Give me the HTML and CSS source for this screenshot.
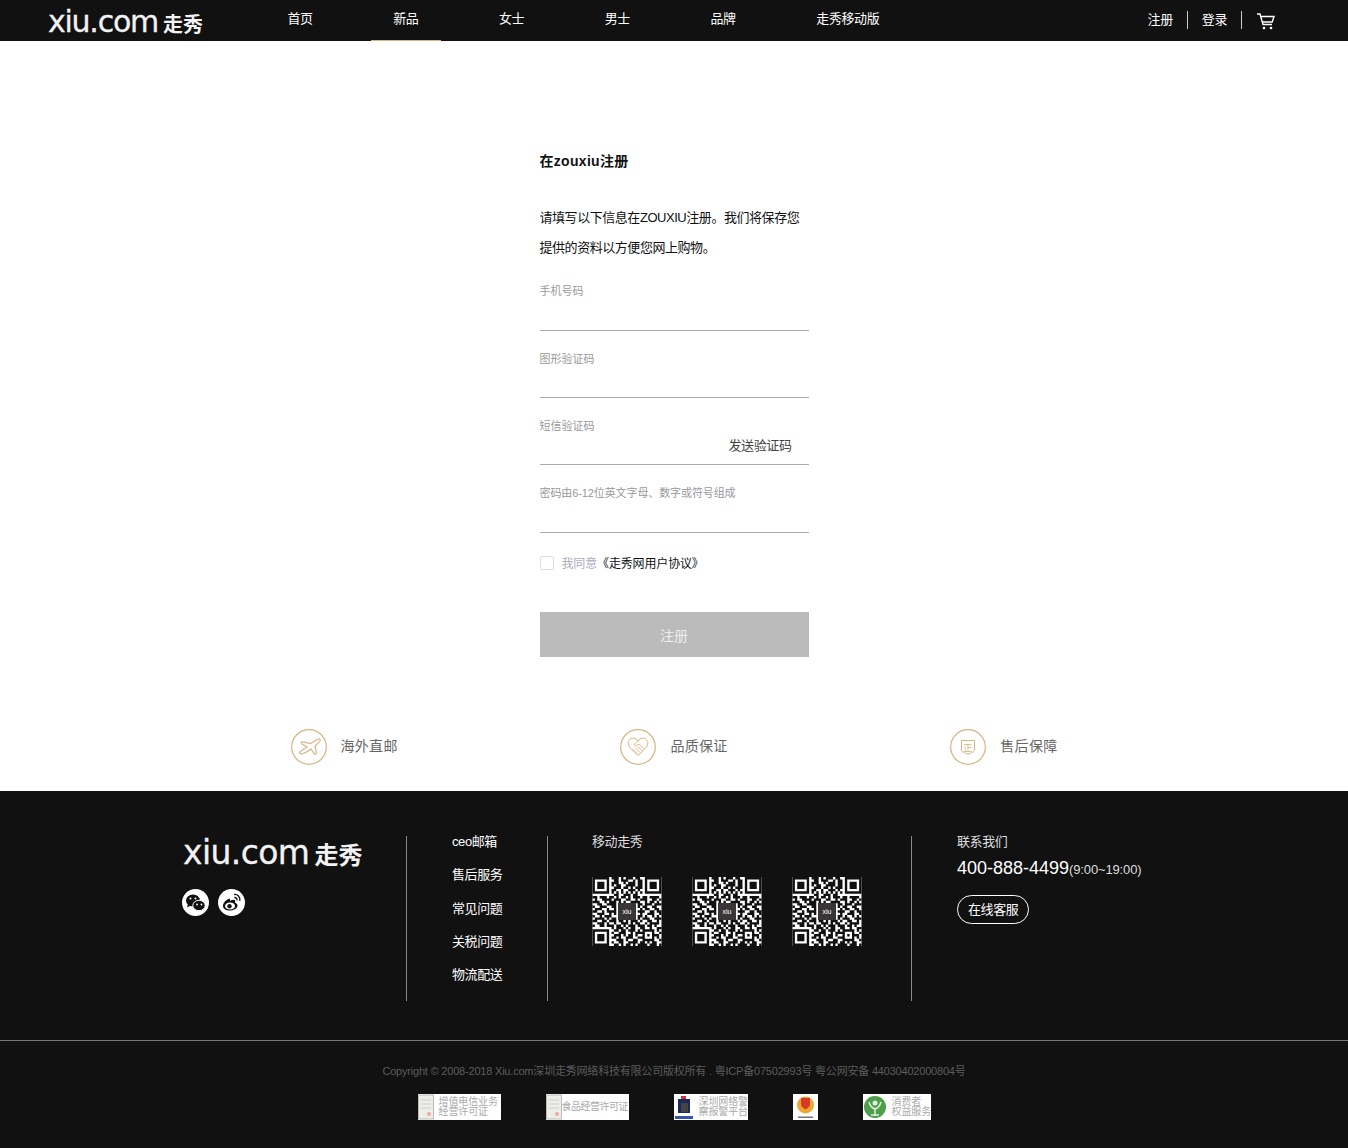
FILE: index.html
```html
<!DOCTYPE html>
<html lang="zh-CN">
<head>
  <title>在zouxiu注册</title>
  <meta charset="utf-8"/>
  <link rel="stylesheet" href="styles.css">
</head>
<body>

  <svg class="defs" width="0" height="0">
    <symbol id="qr" viewBox="0 0 29 29">
      <rect width="29" height="29" fill="#fff"/>
      <path fill="none" stroke="#111" d="M.5 .5h6v6h-6zM22.5 .5h6v6h-6zM.5 22.5h6v6h-6z"/>
      <path fill="#111" d="M2 2h3v3h-3zM24 2h3v3h-3zM2 24h3v3h-3z"/>
      <path fill="none" stroke="#111" d="M8 .5h3M12 .5h1M14 .5h3M18 .5h2
        M9 1.5h2M12 1.5h3M17 1.5h1M19 1.5h2
        M8 2.5h3M13 2.5h1M15 2.5h3M19 2.5h2
        M8 3.5h1M10 3.5h2M14 3.5h4M19 3.5h2
        M9 4.5h3M13 4.5h2M16 4.5h1M18 4.5h3
        M8 5.5h2M12 5.5h1M15 5.5h3M19 5.5h1
        M8 6.5h1M10 6.5h1M12 6.5h1M14 6.5h1M16 6.5h1M18 6.5h1M20 6.5h1
        M9 7.5h2M13 7.5h3M17 7.5h2
        M0 8.5h2M3 8.5h3M7 8.5h2M10 8.5h1M12 8.5h2M15 8.5h1M17 8.5h3M21 8.5h2M24 8.5h4
        M1 9.5h1M4 9.5h4M9 9.5h3M14 9.5h2M18 9.5h1M20 9.5h3M25 9.5h2M28 9.5h1
        M0 10.5h3M5 10.5h1M7 10.5h3M11 10.5h1M13 10.5h1M16 10.5h4M22 10.5h1M24 10.5h2M27 10.5h1
        M2 11.5h2M6 11.5h4M19 11.5h2M22 11.5h3M26 11.5h3
        M0 12.5h1M3 12.5h3M8 12.5h2M19 12.5h1M21 12.5h2M25 12.5h2
        M1 13.5h3M6 13.5h1M9 13.5h1M20 13.5h1M22 13.5h2M26 13.5h2
        M0 14.5h2M4 14.5h1M6 14.5h4M19 14.5h3M24 14.5h2M27 14.5h2
        M2 15.5h3M7 15.5h1M9 15.5h1M20 15.5h1M23 15.5h3M28 15.5h1
        M0 16.5h1M3 16.5h1M5 16.5h3M19 16.5h2M22 16.5h1M25 16.5h1M27 16.5h1
        M1 17.5h4M6 17.5h1M8 17.5h2M19 17.5h1M21 17.5h3M26 17.5h3
        M0 18.5h2M4 18.5h2M7 18.5h3M11 18.5h2M14 18.5h1M16 18.5h3M20 18.5h1M23 18.5h2M27 18.5h1
        M2 19.5h3M6 19.5h1M9 19.5h1M12 19.5h3M16 19.5h1M18 19.5h2M22 19.5h1M24 19.5h4
        M0 20.5h1M3 20.5h2M6 20.5h3M10 20.5h2M13 20.5h1M15 20.5h3M19 20.5h3M23 20.5h2M26 20.5h1
        M8 21.5h1M10 21.5h3M14 21.5h1M16 21.5h2M20 21.5h2M24 21.5h1M27 21.5h2
        M9 22.5h2M12 22.5h2M15 22.5h3M19 22.5h1M21 22.5h5M27 22.5h1
        M8 23.5h1M11 23.5h3M16 23.5h1M18 23.5h3M21 23.5h1M25 23.5h1M28 23.5h1
        M9 24.5h3M13 24.5h1M15 24.5h2M18 24.5h1M21 24.5h1M23 24.5h1M25 24.5h3
        M8 25.5h2M11 25.5h1M14 25.5h3M19 25.5h3M25 25.5h1M27 25.5h1
        M10 26.5h3M14 26.5h1M17 26.5h2M21 26.5h5M28 26.5h1
        M8 27.5h1M11 27.5h2M15 27.5h4M20 27.5h2M23 27.5h1M25 27.5h2
        M9 28.5h2M12 28.5h1M14 28.5h2M17 28.5h1M19 28.5h4M24 28.5h3M28 28.5h1"/>
    </symbol>
  </svg>

  <div class="topbar">
    <a class="logo"><span class="logo-en">xiu.com</span><span class="logo-cn">走秀</span></a>
    <ul class="nav">
      <li>首页</li>
      <li class="on">新品</li>
      <li>女士</li>
      <li>男士</li>
      <li>品牌</li>
      <li>走秀移动版</li>
    </ul>
    <div class="usr">
      <a>注册</a>
      <a>登录</a>
      <svg class="cart" width="18" height="17" viewBox="0 0 18 17">
        <path fill="none" stroke="#fff" stroke-width="1.4" d="M0 1h3l3 10.5h9M4 3.5h13l-1.8 5.5H5.5"/>
        <circle cx="7" cy="15" r="1.3" fill="#fff"/>
        <circle cx="14" cy="15" r="1.3" fill="#fff"/>
      </svg>
    </div>
  </div>

  <div class="reg">
    <h1>在zouxiu注册</h1>
    <p>请填写以下信息在ZOUXIU注册。我们将保存您提供的资料以方便您网上购物。</p>
    <div class="field">
      <label>手机号码</label>
      <div class="inp"></div>
    </div>
    <div class="field">
      <label>图形验证码</label>
      <div class="inp"></div>
    </div>
    <div class="field">
      <label>短信验证码</label>
      <div class="inp"><span class="send">发送验证码</span></div>
    </div>
    <div class="field pwd">
      <label>密码由6-12位英文字母、数字或符号组成</label>
      <div class="inp"></div>
    </div>
    <div class="agree">
      <i class="box"></i>
      <span class="gray">我同意</span><span>《走秀网用户协议》</span>
    </div>
    <button type="button" class="submit">注册</button>
  </div>

  <div class="services">
    <div class="svc">
      <svg width="36" height="36" viewBox="0 0 36 36">
        <circle cx="18" cy="18" r="17.3" fill="none" stroke="#d5b583" stroke-width="1.2"/>
        <path fill="none" stroke="#d5b583" stroke-width="1.2" stroke-linejoin="round" d="M27.5 10c1.5-.6 2.3.6 1.4 2-1.400 2.100-3.200 3.700-5 5.200l1.400 6.600c.2.900-1 2.200-1.700 1.400l-3.700-5.200c-3.200 2.400-6.800 5-9.800 4.800-1.800-.1-1.900-1.700-.6-2.600 2-1.500 4.500-2.900 6.700-4.300l-5.300-3c-1-.6-1-2.100.2-2.100 2.700 0 5.600 1.200 8.300 1.800 2.800-1.800 5.300-3.500 8.100-4.600z"/>
      </svg>
      <span>海外直邮</span>
    </div>
    <div class="svc">
      <svg width="36" height="36" viewBox="0 0 36 36">
        <circle cx="18" cy="18" r="17.3" fill="none" stroke="#d5b583" stroke-width="1.2"/>
        <path fill="none" stroke="#d5b583" d="M18 12c-2.200-3-6-3.800-8.300-1.500-2.500 2.500-1.600 6.200.6 8.600l7.700 7.400 7.700-7.400c2.200-2.400 3.100-6.100.6-8.600-2.300-2.300-6.100-1.500-8.300 1.500z"/>
        <path fill="none" stroke="#d5b583" stroke-width=".9" d="M18 12l-4 3.500c1 1.300 2.500 1.300 3.700.3l1.300-.8 6 5.500M12.500 20l5 5M15 18.500l5 5M17.500 17.500l5 4.500"/>
      </svg>
      <span>品质保证</span>
    </div>
    <div class="svc">
      <svg width="36" height="36" viewBox="0 0 36 36">
        <circle cx="18" cy="18" r="17.3" fill="none" stroke="#d5b583" stroke-width="1.2"/>
        <path fill="none" stroke="#d5b583" d="M11.500 11.500h13v9.500c0 2-3.500 3-6.500 4-3-1-6.500-2-6.500-4z"/>
        <text x="18" y="21.500" text-anchor="middle" class="zheng">正</text>
      </svg>
      <span>售后保障</span>
    </div>
  </div>

  <div class="footer">
    <div class="foot-main">
      <div class="foot-brand">
        <a class="logo big"><span class="logo-en">xiu.com</span><span class="logo-cn">走秀</span></a>
        <div class="social">
          <svg width="27" height="27" viewBox="0 0 27 27">
            <circle cx="13.500" cy="13.500" r="13.500" fill="#fff"/>
            <ellipse cx="11" cy="11.500" rx="7" ry="6" fill="#111"/>
            <path fill="#111" d="M6 15l-1 3.500 4-2z"/>
            <ellipse cx="17" cy="16.500" rx="6.200" ry="5.200" fill="#111" stroke="#fff"/>
            <circle cx="8.500" cy="9.500" r="1" fill="#fff"/>
            <circle cx="13.500" cy="9.500" r="1" fill="#fff"/>
            <circle cx="15" cy="15.500" r=".9" fill="#fff"/>
            <circle cx="19.500" cy="15.500" r=".9" fill="#fff"/>
          </svg>
          <svg width="27" height="27" viewBox="0 0 27 27">
            <circle cx="13.500" cy="13.500" r="13.500" fill="#fff"/>
            <path fill="#111" d="M11.500 9.500c-3 1-7 4.500-6.500 8 .5 3 4.500 4.500 8 4 4-.5 7-3 6.500-5.500-.2-1.300-1.500-2-2.500-2.300.8-1.700 0-3-1.500-3-1.300 0-2.500.5-3.500 1.200.3-1.700-.3-2.800-.5-2.400z"/>
            <ellipse cx="12" cy="17" rx="5" ry="3.600" fill="#fff"/>
            <circle cx="11.500" cy="17.200" r="2.200" fill="#111"/>
            <path fill="none" stroke="#111" stroke-width="1.300" d="M16 5.500c3.500-.5 6.500 2.500 5.800 6.300M16.300 8.500c1.800-.2 3 1.200 2.700 3"/>
          </svg>
        </div>
      </div>
      <div class="foot-links">
        <a>ceo邮箱</a>
        <a>售后服务</a>
        <a>常见问题</a>
        <a>关税问题</a>
        <a>物流配送</a>
      </div>
      <div class="foot-qr">
        <div class="foot-title">移动走秀</div>
        <div class="qrs">
          <div class="qr"><svg width="70" height="69"><use href="#qr"/></svg><span>xiu</span></div>
          <div class="qr"><svg width="70" height="69"><use href="#qr"/></svg><span>xiu</span></div>
          <div class="qr"><svg width="70" height="69"><use href="#qr"/></svg><span>xiu</span></div>
        </div>
      </div>
      <div class="foot-contact">
        <div class="foot-title">联系我们</div>
        <div class="tel">400-888-4499<small>(9:00~19:00)</small></div>
        <a class="kefu">在线客服</a>
      </div>
    </div>
    <div class="foot-bottom">
      <div class="copy">Copyright © 2008-2018 Xiu.com深圳走秀网络科技有限公司版权所有 . 粤ICP备07502993号 粤公网安备 44030402000804号</div>
      <div class="badges">
        <div class="badge w83">
          <svg width="16" height="26" viewBox="0 0 16 26"><rect x=".5" y="1" width="15" height="24" fill="#eeeee8" stroke="#bbb"/><path stroke="#ccc" d="M3 6h10M3 10h10M3 14h10"/><circle cx="11" cy="20" r="2" fill="#eaa"/></svg>
          <span class="two">增值电信业务<br>经营许可证</span>
        </div>
        <div class="badge w83">
          <svg width="16" height="26" viewBox="0 0 16 26"><rect x=".5" y="1" width="15" height="24" fill="#eeeee8" stroke="#bbb"/><path stroke="#ccc" d="M3 6h10M3 10h10M3 14h10"/><circle cx="11" cy="20" r="2" fill="#eaa"/></svg>
          <span class="one">食品经营许可证</span>
        </div>
        <div class="badge w74">
          <svg width="20" height="26" viewBox="0 0 20 26"><rect x="4" y="5" width="12" height="14" fill="#1b2a5c"/><rect x="7" y="9" width="7" height="9" fill="#444"/><path fill="#c33" d="M7 2h5v3h-5z"/><rect x="1" y="22" width="18" height="3" fill="#35a"/></svg>
          <span class="two">深圳网络警<br>察报警平台</span>
        </div>
        <div class="badge w25">
          <svg width="25" height="26" viewBox="0 0 25 26"><circle cx="12.500" cy="11" r="8.500" fill="#eea82f"/><path fill="#d8392b" d="M8 4h9v6c0 3-2.500 4-4.500 5.500-2-1.500-4.500-2.500-4.500-5.500z"/><rect x="5" y="22.500" width="15" height="1.500" fill="#777"/></svg>
        </div>
        <div class="badge w68">
          <svg width="24" height="26" viewBox="0 0 24 26"><circle cx="12" cy="13" r="11" fill="#4f9e4a"/><circle cx="12" cy="9" r="2.500" fill="#dfeedd"/><path fill="none" stroke="#dfeedd" stroke-width="1.500" d="M6 8c1 4 3 6 6 7 3-1 5-3 6-7M12 15v7M8 21h8"/></svg>
          <span class="two">消费者<br>权益服务</span>
        </div>
      </div>
    </div>
  </div>

</body>
</html>
```

FILE: styles.css
```css
* {
  box-sizing: border-box;
}

body {
  margin: 0;
  background: #fff;
  color: #111;
  font-family: "Liberation Sans", "Noto Sans CJK SC", sans-serif;
  font-size: 13px;
  letter-spacing: -0.4px;
}

ul {
  margin: 0;
  padding: 0;
  list-style: none;
}

.defs {
  display: block;
  height: 0;
}

/* top bar */
.topbar {
  display: flex;
  align-items: flex-start;
  height: 41px;
  padding-left: 48px;
  background: #111;
  color: #fff;
}

.logo {
  display: flex;
  align-items: baseline;
  width: 155px;
  color: #f2f2f2;
  white-space: nowrap;
}

.logo-en {
  font-family: "DejaVu Sans", sans-serif;
  font-size: 30px;
  line-height: 44px;
  letter-spacing: -1.25px;
  -webkit-text-stroke: 0.3px #f2f2f2;
}

.logo-cn {
  margin-left: 5px;
  font-family: "Noto Sans CJK SC", sans-serif;
  font-size: 20px;
  font-weight: 700;
  letter-spacing: 0;
}

.nav {
  display: flex;
  gap: 35.8px;
  margin-left: 62px;
}

.nav li {
  height: 41px;
  padding: 0 22.4px;
  line-height: 38px;
}

.nav .on {
  border-bottom: 1px solid #d5b583;
}

.usr {
  display: flex;
  align-items: center;
  margin-left: auto;
  margin-right: 73px;
  height: 39px;
}

.usr a {
  padding-right: 14px;
  margin-right: 14px;
  border-right: 1px solid #ccc;
  line-height: 18px;
}

.cart {
  margin-top: 3px;
  margin-left: 1px;
}

/* form */
.reg {
  width: 269px;
  margin: 110px auto 0;
}

.reg h1 {
  margin: 0 0 32px;
  font-size: 14px;
  line-height: 20px;
  letter-spacing: 0.3px;
}

.reg p {
  margin: 0 0 18px;
  line-height: 30px;
  letter-spacing: -0.45px;
  color: #111;
}

.field {
  margin-bottom: 17px;
}

.field label {
  display: block;
  height: 20px;
  font-size: 11px;
  line-height: 20px;
  letter-spacing: 0;
  color: #999;
  white-space: nowrap;
}

.field + .field label {
  height: 21px;
  padding-top: 1px;
}

.inp {
  display: flex;
  justify-content: flex-end;
  height: 30px;
  padding: 0 17px 0 0;
  border-bottom: 1px solid #aaa;
}

.field + .field .inp {
  height: 29px;
}

.send {
  color: #444;
  line-height: 20px;
}

.field.pwd .inp {
  height: 30px;
}

.pwd label {
  letter-spacing: -0.1px;
}

.agree {
  display: flex;
  align-items: center;
  height: 14px;
  margin-top: 23px;
  font-size: 12px;
  letter-spacing: -0.15px;
  white-space: nowrap;
}

.agree span {
  margin-bottom: 2px;
}

.box {
  width: 14px;
  height: 14px;
  margin-right: 8px;
  border: 1px solid #ddd;
  border-radius: 2px;
}

.gray {
  color: #aab;
}

.submit {
  display: block;
  width: 100%;
  height: 45px;
  margin-top: 42px;
  border: 0;
  background: #bbb;
  color: #eee;
  font: inherit;
  font-size: 14px;
}

/* services */
.services {
  display: flex;
  justify-content: space-between;
  width: 767px;
  margin: 72px auto 0;
  padding-bottom: 26px;
}

.svc {
  display: flex;
  align-items: center;
  gap: 14px;
  height: 36px;
  font-size: 14px;
  letter-spacing: 0.3px;
  color: #666;
}

.svc span {
  margin-bottom: 4px;
}

.zheng {
  fill: #d5b583;
  font-size: 9px;
}

/* footer */
.footer {
  height: 357px;
  padding-top: 45px;
  background: #111;
  color: #fff;
}

.foot-main {
  display: flex;
  height: 165px;
  margin-left: 182px;
}

.foot-brand {
  width: 225px;
  border-right: 1px solid #888;
}

.logo.big {
  width: auto;
  padding-left: 1px;
}

.logo.big .logo-en {
  font-size: 33px;
  line-height: 30px;
  letter-spacing: -0.6px;
}

.logo.big .logo-cn {
  margin-left: 5px;
  font-size: 24px;
}

.social {
  display: flex;
  gap: 9px;
  margin-top: 18px;
}

.foot-links {
  width: 141px;
  padding-left: 45px;
  border-right: 1px solid #888;
}

.foot-links a {
  display: block;
  margin-bottom: 21.3px;
  line-height: 12px;
}

.foot-qr {
  width: 364px;
  padding-left: 44px;
  border-right: 1px solid #888;
}

.foot-title {
  line-height: 12px;
  color: #ddd;
}

.qrs {
  display: flex;
  gap: 30px;
  margin-top: 29px;
}

.qr {
  position: relative;
  height: 69px;
}

.qr svg {
  display: block;
}

.qr span {
  position: absolute;
  left: 26px;
  top: 26px;
  width: 18px;
  height: 17px;
  background: #3a3536;
  color: #fff;
  font-size: 7px;
  line-height: 17px;
  letter-spacing: 0;
  text-align: center;
}

.foot-contact {
  padding-left: 45px;
}

.tel {
  margin-top: 8px;
  font-size: 18px;
  line-height: 24px;
  letter-spacing: 0;
  white-space: nowrap;
}

.tel small {
  font-size: 13px;
  letter-spacing: -0.15px;
  color: #ddd;
}

.kefu {
  display: inline-block;
  height: 29px;
  margin-top: 13px;
  padding: 0 10px;
  border: 1px solid #fff;
  border-radius: 15px;
  line-height: 27px;
}

.foot-bottom {
  margin-top: 39px;
  padding-top: 20px;
  border-top: 1px solid #777;
}

.copy {
  font-size: 11px;
  line-height: 20px;
  letter-spacing: -0.2px;
  text-align: center;
  color: #5c5c5c;
}

.badges {
  display: flex;
  justify-content: center;
  gap: 45px;
  margin-top: 13px;
}

.badge {
  display: flex;
  align-items: center;
  height: 26px;
  background: #fff;
  font-size: 10px;
  line-height: 10.5px;
  letter-spacing: -0.1px;
  color: #aaa;
  white-space: nowrap;
}

.badge svg {
  flex: none;
}

.badge .two {
  padding-left: 5px;
}

.badge .one {
  letter-spacing: -0.5px;
}

.w83 {
  width: 83px;
}

.w74 {
  width: 74px;
}

.w25 {
  width: 25px;
}

.w68 {
  width: 68px;
}
```
